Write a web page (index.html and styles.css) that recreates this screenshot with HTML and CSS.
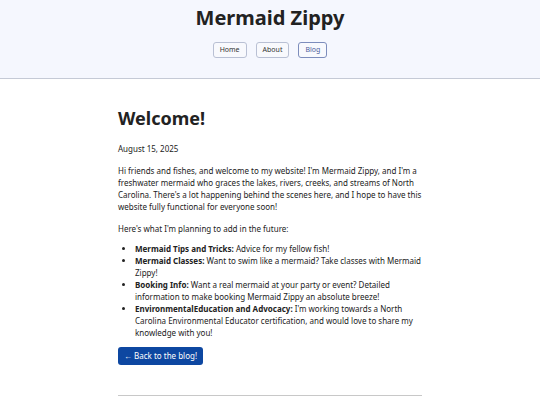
FILE: index.html
```html
<!DOCTYPE html>
<html lang="en">
<head>
  <meta charset="UTF-8" />
  <meta name="viewport" content="width=device-width, initial-scale=1.0" />
  <title>Mermaid Zippy</title>
  <link rel="stylesheet" href="styles.css">
</head>
<body>
  <header>
    <h1>Mermaid Zippy</h1>
    <nav>
      <a href="#">Home</a>
      <a href="#">About</a>
      <a href="#" class="active">Blog</a>
    </nav>
  </header>
  <main>
    <h2>Welcome!</h2>
    <p class="date">August 15, 2025</p>
    <p>Hi friends and fishes, and welcome to my website! I'm Mermaid Zippy, and I'm a freshwater mermaid who graces the lakes, rivers, creeks, and streams of North Carolina. There's a lot happening behind the scenes here, and I hope to have this website fully functional for everyone soon!</p>
    <p class="intro">Here's what I'm planning to add in the future:</p>
    <ul>
      <li><strong>Mermaid Tips and Tricks:</strong> Advice for my fellow fish!</li>
      <li><strong>Mermaid Classes:</strong> Want to swim like a mermaid? Take classes with Mermaid Zippy!</li>
      <li><strong>Booking Info:</strong> Want a real mermaid at your party or event? Detailed information to make booking Mermaid Zippy an absolute breeze!</li>
      <li><strong>EnvironmentalEducation and Advocacy:</strong> I'm working towards a North Carolina Environmental Educator certification, and would love to share my knowledge with you!</li>
    </ul>
    <a href="#" class="back">&larr; Back to the blog!</a>
    <hr>
  </main>
</body>
</html>
```

FILE: styles.css
```css
* {
  box-sizing: border-box;
}
body {
  font-family: 'Noto Sans', sans-serif;
  margin: 0;
  background-color: #ffffff;
  color: #222;
  font-size: 8px;
  line-height: 12px;
}
header {
  background-color: #f5f7fe;
  border-bottom: 1px solid #c5cad6;
  text-align: center;
  padding: 5px 0 20px;
}
h1 {
  margin: 0;
  font-size: 20px;
  line-height: 26px;
  color: #222;
}
nav {
  display: flex;
  justify-content: center;
  gap: 9px;
  margin-top: 11px;
}
nav a {
  display: inline-block;
  padding: 2px 6px;
  border: 1px solid #b9c0d4;
  border-radius: 3px;
  background: #f8f9fd;
  color: #333;
  text-decoration: none;
  font-size: 7px;
  line-height: 10px;
}
nav a.active {
  color: #4b5d9c;
  border-color: #7d8dbc;
}
main {
  width: 304px;
  margin: 0 auto;
  padding-top: 28px;
}
h2 {
  margin: 0;
  font-size: 18px;
  line-height: 22px;
}
p {
  margin: 0 0 10px;
}
.date {
  margin-top: 14px;
}
.intro {
  margin-bottom: 8px;
}
ul {
  margin: 0 0 8px;
  padding-left: 17px;
}
.back {
  display: block;
  width: fit-content;
  background: #0d47a1;
  color: white;
  text-decoration: none;
  padding: 3px 6px;
  border-radius: 3px;
  line-height: 12px;
}
hr {
  border: none;
  border-top: 1px solid #c8c8c8;
  margin: 30px 0 0;
}
```
